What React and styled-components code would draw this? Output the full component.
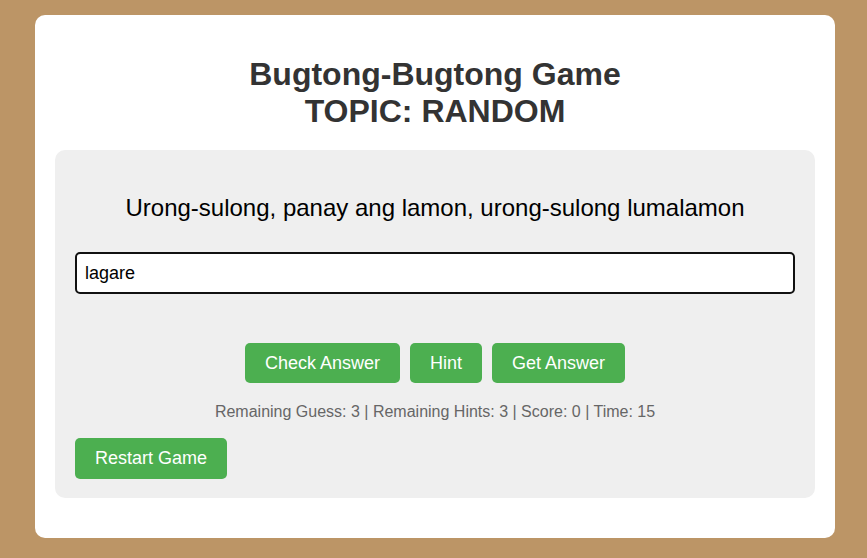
import React, { useState } from "react";
import styled, { createGlobalStyle } from "styled-components";

const GlobalStyle = createGlobalStyle`
  html, body {
    margin: 0;
    padding: 0;
    background-color: #bc9566;
    font-family: "Liberation Sans", Arial, sans-serif;
  }
`;

export default function App() {
  const [answer, setAnswer] = useState("lagare");

  return (
    <>
      <GlobalStyle />
      <Page>
        <Card>
          <Title>
            Bugtong-Bugtong Game
            <br />
            TOPIC: RANDOM
          </Title>
          <GameBox>
            <Riddle>Urong-sulong, panay ang lamon, urong-sulong lumalamon</Riddle>
            <AnswerInput
              type="text"
              value={answer}
              onChange={(e) => setAnswer(e.target.value)}
              autoFocus
            />
            <Actions>
              <Button>Check Answer</Button>
              <Button>Hint</Button>
              <Button>Get Answer</Button>
            </Actions>
            <Status>
              Remaining Guess: 3 | Remaining Hints: 3 | Score: 0 | Time: 15
            </Status>
            <Footer>
              <Button $tall>Restart Game</Button>
            </Footer>
          </GameBox>
        </Card>
      </Page>
    </>
  );
}

const Page = styled.div`
  padding: 15px 32px 20px 35px;
`;

const Card = styled.div`
  width: 800px;
  box-sizing: border-box;
  background-color: #ffffff;
  border-radius: 10px;
  padding: 20px 20px 40px;
`;

const Title = styled.h1`
  margin: 21px 0 20px;
  text-align: center;
  font-size: 32px;
  line-height: 37px;
  font-weight: bold;
  color: #333333;
`;

const GameBox = styled.div`
  background-color: #efefef;
  border-radius: 10px;
  padding: 20px 20px 19px;
  display: flex;
  flex-direction: column;
`;

const Riddle = styled.p`
  margin: 24px 0 30px;
  text-align: center;
  font-size: 24px;
  line-height: 28px;
  color: #000000;
`;

const AnswerInput = styled.input`
  box-sizing: border-box;
  width: 100%;
  height: 42px;
  padding: 8px 8px;
  font-family: "Liberation Sans", Arial, sans-serif;
  font-size: 18px;
  color: #000;
  background: #fff;
  border: 2px solid #111;
  border-radius: 5px;
  outline: none;
`;

const Actions = styled.div`
  display: flex;
  justify-content: center;
  gap: 10px;
  margin-top: 49px;
`;

const Button = styled.button`
  height: ${(p) => (p.$tall ? "41px" : "40px")};
  padding: 0 20px;
  border: none;
  border-radius: 5px;
  background-color: #4caf50;
  color: #ffffff;
  font-family: "Liberation Sans", Arial, sans-serif;
  font-size: 18px;
  cursor: pointer;
`;

const Status = styled.p`
  margin: 20px 0 17px;
  text-align: center;
  font-size: 16px;
  line-height: 18px;
  color: #666666;
`;

const Footer = styled.div`
  display: flex;
`;
